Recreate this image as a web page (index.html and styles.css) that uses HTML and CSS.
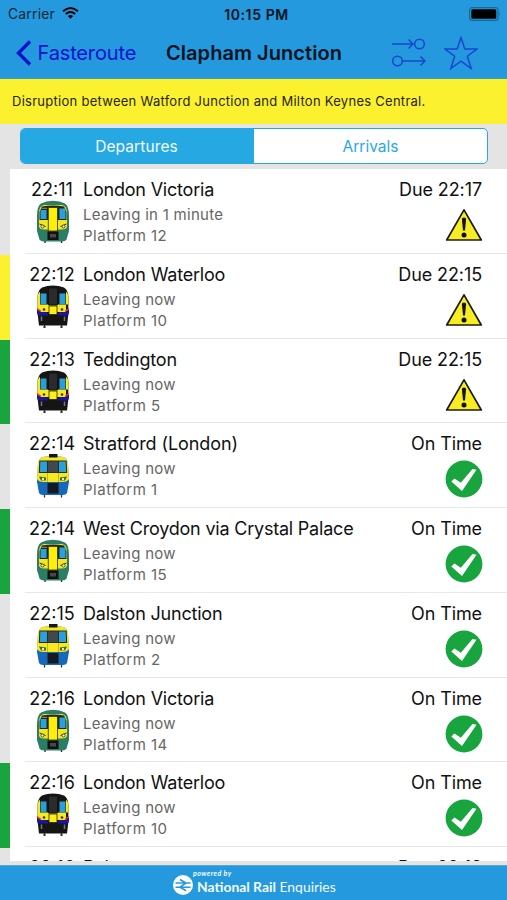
FILE: index.html
```html
<!DOCTYPE html>
<html lang="en">
<head>
<meta charset="utf-8">
<title>Clapham Junction</title>
<link rel="stylesheet" href="styles.css">
</head>
<body>
<svg class="defs" aria-hidden="true">
  <symbol id="train-green" viewBox="0 0 34 44">
    <path d="M9 40v3M25.500 40v3" stroke="#222" stroke-width="1.300"/>
    <path d="M1 16Q1 6 5 3.500Q10 .8 17 .8T29 3.500Q33 6 33 16V31L30.500 39.500Q29.500 41.500 26 41.500H8Q4.500 41.500 3.500 39.500L1 31Z" fill="#2b7d66"/>
    <path d="M3 12Q3.500 6 8 5H26Q30.500 6 31 12V27Q30 29.500 26 29.500H8Q4 29.500 3 27Z" fill="#f3e61f"/>
    <path d="M6 6.500Q17 4.500 28 6.500L30.500 12V20H3.500V12Z" fill="#1b2a24"/>
    <path d="M4.500 10H10.500V19H4.500ZM23.500 8.500H29.500V19H23.500Z" fill="#2ba0dc"/>
    <path d="M5.500 8.300H11" stroke="#b8847c" stroke-width="1"/>
    <path d="M12.300 7.500H21.500V31H12.300Z" fill="#ffee08" stroke="#2a2f14" stroke-width=".8"/>
    <path d="M3.500 24l6 2.500M24.500 26.500l6-2.500" stroke="#333" stroke-width="1"/>
    <circle cx="6.500" cy="26.500" r="1.500" fill="#f4f4dd" stroke="#333" stroke-width=".8"/><circle cx="27.500" cy="26.500" r="1.500" fill="#f4f4dd" stroke="#333" stroke-width=".8"/>
    <path d="M11.500 31.500H22.500V40H11.500Z" fill="#111"/><path d="M14 34H20V37.500H14Z" fill="#484848"/>
  </symbol>
  <symbol id="train-dark" viewBox="0 0 34 44">
    <path d="M8.500 40v3M25.500 40v3M7 42h3M24 42h3" stroke="#333" stroke-width="1.200"/>
    <path d="M1.500 12Q2 5 6 2.500Q11 .5 17 .5T28 2.500Q32 5 32.500 12V28L31 40.500H3L1.500 28Z" fill="#151515"/>
    <path d="M1.500 10L4 6.500V28H1.500ZM32.500 10L30 6.500V28H32.500ZM2 19.500H32V27H2Z" fill="#fae91e"/>
    <path d="M1 24L5 27H10.500L12 29V30.500H2L1 28ZM33 24L29 27H23.500L22 29V30.500H32L33 28Z" fill="#1b169f"/>
    <path d="M1 23.500L5 26.500M33 23.500L29 26.500" stroke="#df412b" stroke-width="1.500"/>
    <path d="M4.500 8.500H10.500V19.500H4.500ZM23.500 8.500H29.500V19.500H23.500Z" fill="#289fd5"/>
    <path d="M12.500 3H21.500V20H12.500Z" fill="#2b2b2b" stroke="#111"/>
    <path d="M13 21H21V29.500H13Z" fill="#ffee13" stroke="#222" stroke-width=".8"/>
    <circle cx="8" cy="24.500" r="1.300" fill="#333"/><circle cx="26" cy="24.500" r="1.300" fill="#333"/>
    <path d="M5.500 31.500V36M28.500 31.500V36" stroke="#777" stroke-width="1.500"/>
  </symbol>
  <symbol id="train-blue" viewBox="0 0 34 44">
    <path d="M8.500 40v3.500M25.500 40v3.500" stroke="#333" stroke-width="1.300"/>
    <path d="M2 10Q3 4 7 3Q17 1 27 3Q31 4 32 10L33 28L31 39Q30 41 27 41H7Q4 41 3 39L1 28Z" fill="#1668b8"/>
    <path d="M2 9Q3 4 7 3Q17 1 27 3Q31 4 32 9L33 25Q31 28 27 28H7Q3 28 1 25Z" fill="#f8e81f"/>
    <path d="M13 0H21.500V3.500H13Z" fill="#171717"/>
    <path d="M3.300 6.500H30.700L31.200 19H2.800Z" fill="#262b2d"/>
    <path d="M4.300 7.500H11V18H3.900ZM23 7.500H29.700L30.100 18H23Z" fill="#2aa1d8"/>
    <path d="M12 7.500H22V18H12Z" fill="#42494c"/>
    <path d="M11.500 19V28M22.500 19V28" stroke="#aaa124" stroke-width=".7"/>
    <path d="M3 22.500L10 23.500V26.500H5ZM31 22.500L24 23.500V26.500H29Z" fill="#3f672b"/>
    <circle cx="7" cy="25" r="1.200" fill="#e9efcb"/><circle cx="27" cy="25" r="1.200" fill="#e9efcb"/>
    <path d="M11.500 29H22.500V39.500H11.500Z" fill="#151a20"/>
  </symbol>
  <symbol id="warn" viewBox="0 0 38 34">
    <path d="M19 1.800L36.300 32H1.700Z" fill="#f8ed23" stroke="#1c1b12" stroke-width="1.700" stroke-linejoin="round"/>
    <path d="M16.900 11Q16.900 9.500 19 9.500T21.100 11L20 22.500H18Z" fill="#111"/>
    <circle cx="19" cy="27" r="2.500" fill="#111"/>
  </symbol>
  <symbol id="ok" viewBox="0 0 38 38">
    <circle cx="19" cy="19" r="18.400" fill="#18a53d"/>
    <path d="M6.300 21.500L9.500 18.500L15.800 22.800L27.500 9L31.500 9.800L17 31Z" fill="#fff"/>
  </symbol>
</svg>
<div class="screen">
  <header class="top">
    <div class="status">
      <div class="carrier"><span>Carrier</span>
        <svg class="wifi" viewBox="0 0 17 12"><path d="M1 4.300Q8.500-2.300 16 4.300M3.800 7Q8.500 3 13.200 7" fill="none" stroke="#000" stroke-width="1.900"/><path d="M5.900 9Q8.500 6.800 11.100 9L8.500 11.800Z"/></svg>
      </div>
      <div class="clock">10:15 PM</div>
      <svg class="battery" viewBox="0 0 32 14"><rect x=".6" y=".6" width="28.500" height="12.800" rx="3" fill="none" stroke="#176894" stroke-width="1.100"/><rect x="2.300" y="2.300" width="25" height="9.400" rx="1.500"/><path d="M30.200 4.800Q31.800 7 30.200 9.200Z" fill="#176894"/></svg>
    </div>
    <nav class="nav">
      <a class="back"><svg class="chevron" viewBox="0 0 16 26"><path d="M14 1.500L2.500 13L14 24.500" fill="none" stroke="#0a12cc" stroke-width="3.400"/></svg><span>Fasteroute</span></a>
      <h1 class="title">Clapham Junction</h1>
      <div class="tools">
        <svg class="route" viewBox="0 0 34 29" fill="none" stroke="#1746cf" stroke-width="1.500"><path d="M0 6H21M16.500 1.500L21 6L16.500 10.500M11 23H33M28.500 18.500L33 23L28.500 27.500"/><circle cx="27.500" cy="6" r="4.800"/><circle cx="5.500" cy="23" r="4.800"/></svg>
        <svg class="star" viewBox="0 0 34 34"><path d="M17 1.500L20.800 13H33L23.300 20.200L27.200 32.500L17 25.100L6.800 32.500L10.700 20.200L1 13H13.200Z" fill="none" stroke="#1746cf" stroke-width="1.500"/></svg>
      </div>
    </nav>
  </header>
  <div class="alert">Disruption between Watford Junction and Milton Keynes Central.</div>
  <div class="segments"><div class="tabs"><div class="tab tab-on">Departures</div><div class="tab">Arrivals</div></div></div>
  <main class="list">
    <article class="row"><div class="strip"></div><div class="cell"><div class="lead"><div class="time">22:11</div><svg class="train"><use href="#train-green"/></svg></div><div class="info"><div class="dest">London Victoria</div><div class="sub">Leaving in 1 minute</div><div class="sub platform">Platform 12</div></div><div class="state"><div class="due">Due 22:17</div><svg class="warn"><use href="#warn"/></svg></div></div></article>
    <article class="row"><div class="strip yellow"></div><div class="cell"><div class="lead"><div class="time">22:12</div><svg class="train"><use href="#train-dark"/></svg></div><div class="info"><div class="dest">London Waterloo</div><div class="sub">Leaving now</div><div class="sub platform">Platform 10</div></div><div class="state"><div class="due">Due 22:15</div><svg class="warn"><use href="#warn"/></svg></div></div></article>
    <article class="row"><div class="strip green"></div><div class="cell"><div class="lead"><div class="time">22:13</div><svg class="train"><use href="#train-dark"/></svg></div><div class="info"><div class="dest">Teddington</div><div class="sub">Leaving now</div><div class="sub platform">Platform 5</div></div><div class="state"><div class="due">Due 22:15</div><svg class="warn"><use href="#warn"/></svg></div></div></article>
    <article class="row"><div class="strip"></div><div class="cell"><div class="lead"><div class="time">22:14</div><svg class="train"><use href="#train-blue"/></svg></div><div class="info"><div class="dest wide">Stratford (London)</div><div class="sub">Leaving now</div><div class="sub platform">Platform 1</div></div><div class="state"><div class="due">On Time</div><svg class="ok"><use href="#ok"/></svg></div></div></article>
    <article class="row"><div class="strip green"></div><div class="cell"><div class="lead"><div class="time">22:14</div><svg class="train"><use href="#train-green"/></svg></div><div class="info"><div class="dest">West Croydon via Crystal Palace</div><div class="sub">Leaving now</div><div class="sub platform">Platform 15</div></div><div class="state"><div class="due">On Time</div><svg class="ok"><use href="#ok"/></svg></div></div></article>
    <article class="row"><div class="strip"></div><div class="cell"><div class="lead"><div class="time">22:15</div><svg class="train"><use href="#train-blue"/></svg></div><div class="info"><div class="dest">Dalston Junction</div><div class="sub">Leaving now</div><div class="sub platform">Platform 2</div></div><div class="state"><div class="due">On Time</div><svg class="ok"><use href="#ok"/></svg></div></div></article>
    <article class="row"><div class="strip"></div><div class="cell"><div class="lead"><div class="time">22:16</div><svg class="train"><use href="#train-green"/></svg></div><div class="info"><div class="dest">London Victoria</div><div class="sub">Leaving now</div><div class="sub platform">Platform 14</div></div><div class="state"><div class="due">On Time</div><svg class="ok"><use href="#ok"/></svg></div></div></article>
    <article class="row"><div class="strip green"></div><div class="cell"><div class="lead"><div class="time">22:16</div><svg class="train"><use href="#train-dark"/></svg></div><div class="info"><div class="dest">London Waterloo</div><div class="sub">Leaving now</div><div class="sub platform">Platform 10</div></div><div class="state"><div class="due">On Time</div><svg class="ok"><use href="#ok"/></svg></div></div></article>
    <article class="row"><div class="strip"></div><div class="cell"><div class="lead"><div class="time">22:16</div></div><div class="info"><div class="dest">Bal</div></div><div class="state"><div class="due">Due 22:18</div></div></div></article>
  </main>
  <footer class="footer">
    <svg class="logo" viewBox="0 0 20 20"><circle cx="10" cy="10" r="10" fill="#fff"/><path d="M2.500 8H17.500M2.500 12.200H17.500M7 4.500L13 8L7 12.200L13 15.700" fill="none" stroke="#2499de" stroke-width="1.600"/></svg>
    <div class="brand"><div class="powered">powered by</div><div class="name"><b>National Rail</b> Enquiries</div></div>
  </footer>
</div>
</body>
</html>
```

FILE: styles.css
```css
* { box-sizing: border-box; }
body { margin: 0; font-family: Inter, "Liberation Sans", sans-serif; color: #111; }
svg { display: block; flex: none; }
.defs { position: absolute; width: 0; height: 0; }
.screen { width: 507px; height: 900px; display: flex; flex-direction: column; overflow: hidden; background: #e4e4e4; }
.top { height: 79px; flex: none; background: #2499de; border-bottom: 1px solid #3d9cb4; }
.status { height: 27px; display: grid; grid-template-columns: 1fr auto 1fr; align-items: center; padding: 1px 6px 0 8px; }
.carrier { display: flex; align-items: center; gap: 7px; font-size: 13.800px; color: #0c2635; letter-spacing: .25px; }
.wifi { width: 17px; height: 12px; margin-top: -2px; }
.clock { padding-left: 4px; font-size: 14px; font-weight: 600; letter-spacing: .6px; color: #02121c; }
.battery { width: 32px; height: 14px; justify-self: end; margin-top: -1px; }
.nav { height: 51px; display: grid; grid-template-columns: 150px 1fr 131px; align-items: center; padding: 0 0 0 16px; }
.back { display: flex; align-items: center; gap: 5.500px; font-size: 20px; letter-spacing: -.15px; color: #0a12cc; }
.chevron { width: 16px; height: 26px; }
.title { margin: 0; font-size: 20px; font-weight: 600; letter-spacing: .05px; color: #03131d; white-space: nowrap; }
.tools { display: flex; align-items: center; gap: 18px; padding-left: 16px; }
.route { width: 34px; height: 29px; }
.star { width: 34px; height: 34px; }
.alert { height: 45px; flex: none; padding-left: 12px; line-height: 45px; font-size: 13px; letter-spacing: .27px; color: #28240a; background: #fbf12f; white-space: nowrap; }
.segments { height: 45px; flex: none; padding: 4px 19px 5px 20px; }
.tabs { height: 36px; display: grid; grid-template-columns: 1fr 1fr; overflow: hidden; border: 1px solid #2ba8e2; border-radius: 5px; background: #fff; }
.tab { display: flex; align-items: center; justify-content: center; font-size: 15.500px; color: #2ba8e2; }
.tab-on { padding-right: 2px; letter-spacing: .1px; background: #26a8e2; color: #f3fbff; }
.list { height: 692px; flex: none; overflow: hidden; }
.row { height: 84.750px; display: flex; }
.strip { width: 10px; flex: none; margin: 1px 0 -1px; background: #e4e4e4; }
.yellow { background: #fbf12f; }
.green { background: #18a53d; }
.cell { flex: 1; height: 84.750px; display: flex; background: linear-gradient(#e8e8e8, #e8e8e8) 15px 100% / 100% 1px no-repeat #fff; padding-right: 24px; }
.lead { width: 73px; padding: 9px 0 0 19px; }
.time, .dest, .due { height: 23px; line-height: 23px; font-size: 18px; white-space: nowrap; }
.time { width: 46px; text-align: center; }
.dest { letter-spacing: -.21px; }
.wide { letter-spacing: -.08px; }
.train { width: 34px; height: 44px; margin: -1px 0 0 6.500px; }
.info { flex: 1; padding-top: 9px; }
.sub { height: 21px; line-height: 21px; padding-top: 3px; font-size: 15px; letter-spacing: .28px; color: #666; white-space: nowrap; }
.platform { letter-spacing: .5px; }
.state { padding-top: 9px; display: flex; flex-direction: column; align-items: flex-end; }
.due { margin-right: 1px; letter-spacing: -.1px; }
.warn { width: 38px; height: 34px; margin-top: 7px; }
.ok { width: 38px; height: 38px; margin-top: 5px; }
.footer { height: 35px; margin-top: auto; display: flex; gap: 4px; padding-left: 173px; background: #2499de; color: #f4fbff; border-top: 1px solid #5fa9d0; }
.logo { width: 20px; height: 20px; margin-top: 9px; }
.brand { font-family: Lato, sans-serif; white-space: nowrap; }
.powered { height: 11px; line-height: 14px; margin-left: -4px; font-size: 7px; letter-spacing: .45px; font-style: italic; font-weight: 700; }
.name { line-height: 19px; font-size: 13.900px; }
```
